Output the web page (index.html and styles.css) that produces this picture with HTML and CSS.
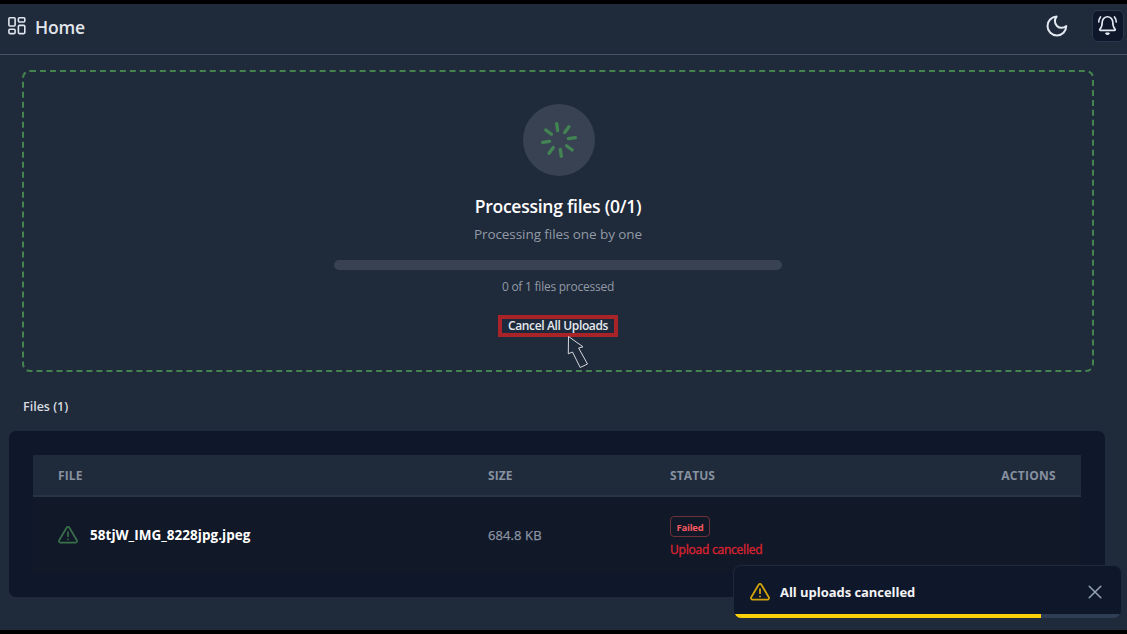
FILE: index.html
```html
<!DOCTYPE html>
<html lang="en">
<head>
<meta charset="utf-8">
<title>Home</title>
<link rel="stylesheet" href="styles.css">
</head>
<body>
<div class="app">
  <header class="header">
    <svg class="logo" width="18" height="18" viewBox="0 0 18 18" fill="none" stroke="currentColor" stroke-width="1.6"><rect x=".9" y=".8" width="6.2" height="8.2" rx="1"/><rect x="10.4" y=".8" width="6.4" height="4.2" rx="1"/><rect x=".9" y="12.2" width="6.2" height="4.4" rx="1"/><rect x="10.4" y="8.4" width="6.4" height="8.2" rx="1"/></svg>
    <h1 class="title">Home</h1>
    <svg class="moon" width="24" height="24" viewBox="0 0 24 24" fill="none" stroke="currentColor" stroke-width="2" stroke-linecap="round" stroke-linejoin="round"><path d="M11.6 2.6a6.8 6.8 0 0 0 9.7 9.5 9.4 9.4 0 1 1-9.7-9.5Z"/></svg>
    <button class="bell" aria-label="Notifications"><svg width="21" height="21" viewBox="0 0 24 24" fill="none" stroke="currentColor" stroke-width="1.9" stroke-linecap="round" stroke-linejoin="round"><path d="M10.3 21a2 2 0 0 0 3.4 0ZM4 2.2C2.8 3.7 2 5.7 2 8M20 2.2c1.2 1.5 2 3.5 2 5.8M18 8A6 6 0 0 0 6 8c0 5-1.1 6.5-2.6 8-.6.7-.2 1.5.6 1.5h16c.8 0 1.2-.8.6-1.5C19.1 14.5 18 13 18 8"/></svg></button>
  </header>
  <main class="main">
    <section class="dropzone">
      <div class="spinner"><svg width="40" height="40" viewBox="-20 -20 40 40" stroke="currentColor" stroke-width="3.3" stroke-linecap="round"><g transform="rotate(-8)"><path d="M0-16.5V-9.500M11.700-11.700 6.700-6.700M16.500 0H9.500M11.700 11.700 6.700 6.700M0 16.500V9.500M-11.700 11.700-6.700 6.700M-16.500 0H-9.500M-11.700-11.700-6.700-6.700"/></g></svg></div>
      <h2 class="processing">Processing files (0/1)</h2>
      <p class="subtitle">Processing files one by one</p>
      <div class="progress"></div>
      <p class="count">0 of 1 files processed</p>
      <button class="cancel"><span>Cancel All Uploads</span></button>
      <svg class="cursor" width="24" height="36" viewBox="0 0 24 36" fill="none" stroke="#d5d8de" stroke-width="1"><path d="M2.5 2.5 17 12.800 12.600 14 21.500 30 14.200 33.500 6.500 18 2.300 19.800Z"/></svg>
    </section>
    <h3 class="files-title">Files (1)</h3>
    <section class="card">
      <div class="row head"><span class="th file">FILE</span><span class="th size">SIZE</span><span class="th status">STATUS</span><span class="th actions">ACTIONS</span></div>
      <div class="row item">
        <div class="name"><svg class="warn" width="20" height="18" viewBox="0 0 20 18" fill="none" stroke="currentColor" stroke-width="1.7" stroke-linecap="round" stroke-linejoin="round"><path d="M8.6 1.7 1.2 14.3A1.6 1.6 0 0 0 2.6 16.7H17.4A1.6 1.6 0 0 0 18.8 14.3L11.4 1.7A1.6 1.6 0 0 0 8.6 1.7ZM10 6.2V10.2M10 13.3V13.4"/></svg><span class="filename">58tjW_IMG_8228jpg.jpeg</span></div>
        <span class="filesize">684.8 KB</span>
        <div class="state"><span class="badge"><span>Failed</span></span><span class="error">Upload cancelled</span></div>
      </div>
    </section>
  </main>
  <aside class="toast">
    <div class="toast-body">
      <svg class="warn" width="20" height="18" viewBox="0 0 20 18" fill="none" stroke="currentColor" stroke-width="1.8" stroke-linecap="round" stroke-linejoin="round"><path d="M8.6 1.7 1.2 14.3A1.6 1.6 0 0 0 2.6 16.7H17.4A1.6 1.6 0 0 0 18.8 14.3L11.4 1.7A1.6 1.6 0 0 0 8.6 1.7ZM10 6.2V10.2M10 13.3V13.4"/></svg>
      <span class="toast-text">All uploads cancelled</span>
      <svg class="close" width="14" height="14" viewBox="0 0 14 14" fill="none" stroke="currentColor" stroke-width="1.5" stroke-linecap="round"><path d="m1.2 1.2 11.6 11.6M12.8 1.2 1.2 12.8"/></svg>
    </div>
    <div class="timer"><div class="timer-fill" style="width:79.2%"></div></div>
  </aside>
</div>
</body>
</html>
```
FILE: styles.css
```css
* { box-sizing: border-box; margin: 0; padding: 0; }
body { height: 634px; padding: 4px 0; background: #000; overflow: hidden; font-family: "Open Sans", "Noto Sans", sans-serif; white-space: nowrap; }
button { font: inherit; }
svg { display: block; flex: none; }
.app { position: relative; height: 626px; background: #1f2a3a; }
.header { display: flex; align-items: center; height: 51px; padding: 0 3px 6px 8px; border-bottom: 1px solid #475364; color: #dfe5ee; }
.title { margin: 1px 0 0 9px; font-size: 17.5px; font-weight: 650; line-height: 24px; letter-spacing: -.15px; color: #e2e6ec; }
.moon { margin-left: auto; margin-right: 23px; color: #e3e9f2; }
.bell { display: flex; align-items: center; justify-content: center; width: 32px; height: 32px; padding-bottom: 1px; padding-right: 1px; border: 1px solid #2b384d; border-radius: 6px; background: #0f172a; color: #e3e9f2; }
.main { padding: 15px 22px 0 9px; }
.dropzone { position: relative; display: flex; flex-direction: column; align-items: center; height: 302px; margin: 0 11px 0 13px; padding-top: 32px; border: 2px dashed #45834f; border-radius: 8px; }
.spinner { display: flex; align-items: center; justify-content: center; width: 72px; height: 72px; margin-left: 1px; border-radius: 50%; background: #384253; color: #438453; }
.processing { margin-top: 18px; font-size: 17.5px; font-weight: 600; line-height: 24px; letter-spacing: -.25px; color: #fff; }
.subtitle { margin-top: 6px; font-size: 13.5px; line-height: 20px; letter-spacing: -.07px; color: #929aa6; }
.progress { width: 448px; height: 10px; margin-top: 16px; border-radius: 5px; background: #384253; }
.count { margin-top: 9px; font-size: 12px; line-height: 16px; letter-spacing: -.24px; color: #929aa6; }
.cancel { display: flex; align-items: center; justify-content: center; width: 120px; height: 22px; margin-top: 20px; padding-bottom: 1px; border: 4px solid #a92429; background: #1e293b; color: #e6e9ee; font-size: 12px; font-weight: 650; line-height: 14px; letter-spacing: -.36px; }
.cursor { position: absolute; left: 542px; top: 262px; }
.files-title { margin: 26px 0 0 14px; font-size: 12.5px; font-weight: 600; line-height: 18px; color: #d7dbe1; }
.card { height: 166px; margin-top: 15px; padding: 24px; border-radius: 7px; background: #0f172a; }
.row { display: grid; grid-template-columns: 430px 182px 1fr 80px; padding-left: 25px; }
.head { align-items: center; height: 42px; padding-top: 2px; padding-right: 25px; border-bottom: 2px solid #273445; background: #1f2a3a; }
.th { font-size: 12px; font-weight: 700; line-height: 16px; letter-spacing: .1px; color: #8791a0; }
.th.actions { letter-spacing: .3px; text-align: right; }
.item { height: 76px; background: #111827; }
.name { display: flex; align-items: center; height: 76px; gap: 12px; color: #39704b; }
.filename { font-size: 13.5px; font-weight: 700; line-height: 18px; letter-spacing: .03px; color: #fff; }
.filesize { padding-top: 29px; font-size: 13px; line-height: 18px; letter-spacing: .1px; -webkit-text-stroke: .25px; color: #8b95a4; }
.state { display: flex; flex-direction: column; align-items: flex-start; padding-top: 19px; }
.badge { display: flex; align-items: center; justify-content: center; width: 40px; height: 21px; padding-top: 1px; border: 1.5px solid #703039; border-radius: 4px; color: #f65a60; font-size: 9.5px; font-weight: 700; letter-spacing: -.2px; }
.error { margin-top: 4px; font-size: 12px; line-height: 17px; letter-spacing: -.22px; -webkit-text-stroke: .4px; color: #d8232f; }
.toast { position: absolute; right: 5px; bottom: 12px; width: 389px; height: 53px; border: 1px solid #1e293b; border-bottom: 0; border-radius: 8px; background: #0f172a; overflow: hidden; }
.toast-body { display: flex; align-items: center; height: 48px; padding: 3px 19px 0 16px; color: #d0a30b; }
.toast-text { margin-left: 10px; font-size: 13px; font-weight: 700; line-height: 18px; letter-spacing: -.05px; color: #f3f4f6; }
.close { margin-left: auto; color: #94a3b8; }
.timer { height: 4px; background: #303e55; }
.timer-fill { height: 100%; background: #fbd00b; }
```
